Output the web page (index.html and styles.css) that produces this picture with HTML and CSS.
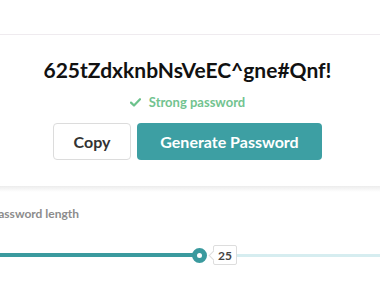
FILE: index.html
```html
<!DOCTYPE html>
<html>
<head>
<meta charset="utf-8">
<link rel="stylesheet" href="styles.css">
</head>
<body>
<div class="page">
  <header class="topbar"></header>
  <section class="result">
    <div class="password">625tZdxknbNsVeEC^gne#Qnf!</div>
    <div class="strength">
      <svg class="check" width="11" height="9" viewBox="0 0 11 9"><path d="M1 4.6 L4 7.5 L10 1.2" fill="none" stroke="#6cc28c" stroke-width="2.2" stroke-linecap="round" stroke-linejoin="round"/></svg>
      <span>Strong password</span>
    </div>
    <div class="actions">
      <button class="btn btn-copy">Copy</button>
      <button class="btn btn-generate">Generate Password</button>
    </div>
  </section>
  <div class="divider"></div>
  <section class="settings">
    <div class="label">Password length</div>
    <div class="slider">
      <div class="fill"></div>
      <div class="thumb"></div>
      <div class="value">25</div>
      <div class="rest"></div>
    </div>
  </section>
</div>
</body>
</html>
```
FILE: styles.css
```css
html, body {
  margin: 0;
  padding: 0;
  background: #ffffff;
}
body {
  width: 380px;
  height: 285px;
  overflow: hidden;
  font-family: Lato, "Noto Sans", sans-serif;
}
.page {
  display: flex;
  flex-direction: column;
}
.topbar {
  height: 34px;
  border-bottom: 1px solid #efebef;
}
.result {
  display: flex;
  flex-direction: column;
  align-items: center;
  padding-top: 23px;
  padding-right: 5px;
  height: 151px;
  box-sizing: border-box;
}
.password {
  font-size: 21px;
  font-weight: 700;
  color: #111;
  line-height: 24px;
}
.strength {
  display: flex;
  align-items: center;
  gap: 8px;
  margin-top: 13px;
  font-size: 13px;
  font-weight: 700;
  color: #72c38f;
  line-height: 14px;
}
.actions {
  display: flex;
  gap: 6px;
  margin-top: 14px;
}
.btn {
  height: 37px;
  font-family: Lato, "Noto Sans", sans-serif;
  font-size: 16px;
  font-weight: 700;
  border-radius: 4px;
  padding: 0;
}
.btn-copy {
  width: 78px;
  background: #fff;
  border: 1px solid #dcdcdc;
  color: #333;
}
.btn-generate {
  width: 185px;
  background: #3d9fa3;
  border: none;
  color: #fff;
}
.divider {
  height: 6px;
  background: linear-gradient(#ececec, #ffffff);
}
.settings {
  margin-left: -9px;
  padding-top: 15px;
}
.label {
  font-size: 12px;
  font-weight: 700;
  color: #8c8c8c;
  line-height: 14px;
}
.slider {
  display: flex;
  align-items: center;
  margin-top: 24px;
  height: 20px;
}
.fill {
  width: 203px;
  height: 4px;
  background: #3a9a9e;
}
.thumb {
  width: 15px;
  height: 15px;
  border-radius: 50%;
  box-sizing: border-box;
  border: 5px solid #3a9a9e;
  background: #fff;
  margin-left: -2px;
  flex: none;
}
.value {
  position: relative;
  margin-left: 6px;
  width: 22px;
  height: 18px;
  border: 1px solid #dddddd;
  border-radius: 2px;
  font-size: 12px;
  font-weight: 700;
  color: #444;
  display: flex;
  align-items: center;
  justify-content: center;
  flex: none;
  background: #fff;
}
.value::before {
  content: "";
  position: absolute;
  left: -4px;
  top: 6px;
  width: 6px;
  height: 6px;
  background: #fff;
  border-left: 1px solid #dddddd;
  border-bottom: 1px solid #dddddd;
  transform: rotate(45deg);
}
.rest {
  flex: 1;
  height: 3px;
  background: #d6edf0;
}
```
